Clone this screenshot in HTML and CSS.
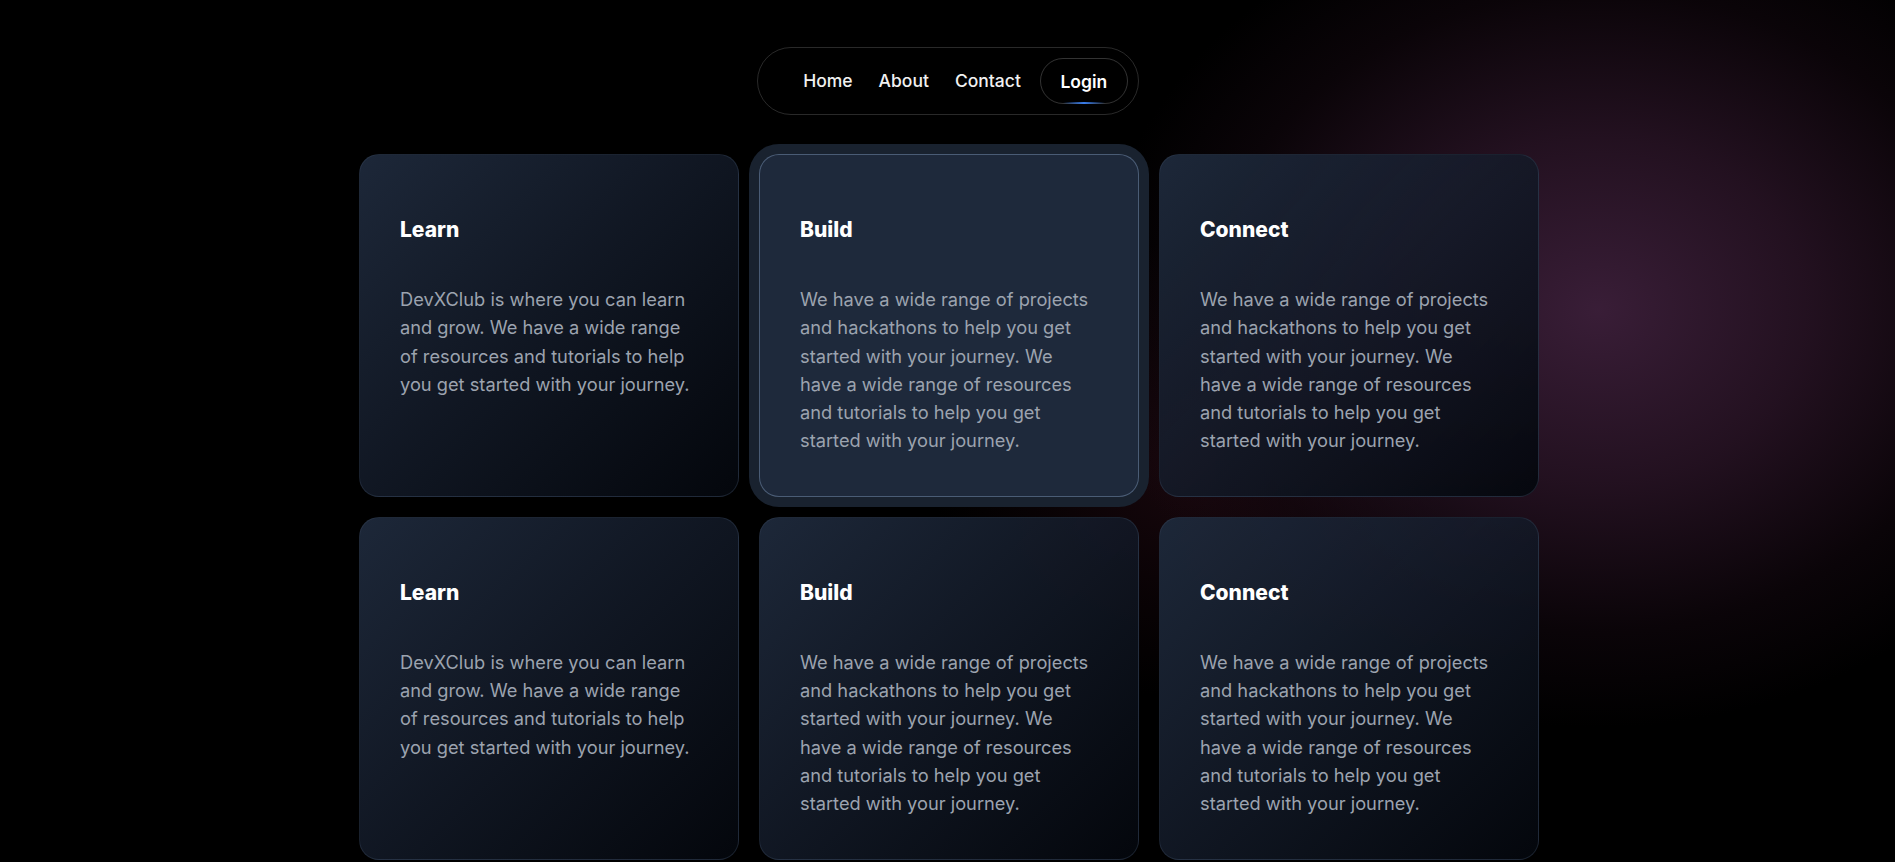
FILE: index.html
```html
<!DOCTYPE html>
<html lang="en">
<head>
<meta charset="utf-8">
<title>DevXClub</title>
<link rel="stylesheet" href="styles.css">
</head>
<body>
<header class="header">
  <nav class="nav">
    <a class="nav-link" href="#">Home</a>
    <a class="nav-link" href="#">About</a>
    <a class="nav-link" href="#">Contact</a>
    <a class="login" href="#">Login</a>
  </nav>
</header>
<main class="grid">
  <section class="card">
    <h3 class="card-title">Learn</h3>
    <p class="card-text">DevXClub is where you can learn and grow. We have a wide range of resources and tutorials to help you get started with your journey.</p>
  </section>
  <section class="card card-active">
    <h3 class="card-title">Build</h3>
    <p class="card-text">We have a wide range of projects and hackathons to help you get started with your journey. We have a wide range of resources and tutorials to help you get started with your journey.</p>
  </section>
  <section class="card">
    <h3 class="card-title">Connect</h3>
    <p class="card-text">We have a wide range of projects and hackathons to help you get started with your journey. We have a wide range of resources and tutorials to help you get started with your journey.</p>
  </section>
  <section class="card">
    <h3 class="card-title">Learn</h3>
    <p class="card-text">DevXClub is where you can learn and grow. We have a wide range of resources and tutorials to help you get started with your journey.</p>
  </section>
  <section class="card">
    <h3 class="card-title">Build</h3>
    <p class="card-text">We have a wide range of projects and hackathons to help you get started with your journey. We have a wide range of resources and tutorials to help you get started with your journey.</p>
  </section>
  <section class="card">
    <h3 class="card-title">Connect</h3>
    <p class="card-text">We have a wide range of projects and hackathons to help you get started with your journey. We have a wide range of resources and tutorials to help you get started with your journey.</p>
  </section>
</main>
</body>
</html>
```

FILE: styles.css
```css
* { box-sizing: border-box; }

html {
  background: #000;
  height: 100%;
}

body {
  margin: 0;
  padding: 0;
  height: 100%;
  overflow: hidden;
  font-family: Inter, "Noto Sans", sans-serif;
  color: #fff;
  background:
    radial-gradient(ellipse 700px 580px at 1598px 310px, rgba(60, 31, 58, 0.95) 0%, rgba(48, 23, 44, 0.72) 30%, rgba(30, 12, 24, 0.35) 55%, rgba(0, 0, 0, 0) 72%),
    radial-gradient(ellipse 368px 325px at 1190px 470px, rgba(40, 12, 22, 0.6) 0%, rgba(30, 8, 16, 0.3) 40%, rgba(0, 0, 0, 0) 70%),
    #000;
}

.header {
  display: flex;
  justify-content: center;
  padding-top: 47px;
}

.nav {
  display: flex;
  align-items: center;
  gap: 20px;
  padding: 10px 10px 10px 42px;
  border: 1px solid rgba(255, 255, 255, 0.16);
  border-radius: 40px;
  margin-left: 1px;
}

.nav-link {
  color: #f1f1f1;
  text-decoration: none;
  font-size: 17.5px;
  font-weight: 500;
  padding: 0 3px;
  line-height: 22px;
}

.login {
  position: relative;
  display: flex;
  align-items: center;
  justify-content: center;
  width: 88px;
  height: 46px;
  margin-left: -4px;
  border: 1px solid rgba(255, 255, 255, 0.2);
  border-radius: 23px;
  color: #fff;
  text-decoration: none;
  font-size: 17.5px;
  font-weight: 600;
}

.login::after {
  content: "";
  position: absolute;
  left: 22px;
  right: 22px;
  bottom: -1px;
  height: 2px;
  background: linear-gradient(90deg, rgba(59, 130, 246, 0), rgba(59, 130, 246, 0.95), rgba(59, 130, 246, 0));
}

.grid {
  display: grid;
  grid-template-columns: repeat(3, 380px);
  gap: 20px;
  justify-content: center;
  margin-top: 39px;
  padding-left: 3px;
}

.card {
  border: 1px solid rgba(51, 65, 85, 0.45);
  border-radius: 20px;
  padding: 60px 40px 41px;
  background: linear-gradient(135deg, rgba(30, 41, 59, 0.96) 0%, rgba(21, 29, 44, 0.82) 45%, rgba(4, 7, 13, 0.92) 100%);
}

.card-active {
  background: #1e293b;
  border: 1px solid rgba(90, 110, 138, 0.75);
  box-shadow: 0 0 0 10px #19222f;
}

.card-title {
  margin: 0 0 40px;
  font-size: 21px;
  line-height: 30px;
  font-weight: 800;
  color: #fff;
}

.card-text {
  margin: 0;
  font-size: 18.25px;
  line-height: 28.3px;
  color: #9ca3af;
}
```
